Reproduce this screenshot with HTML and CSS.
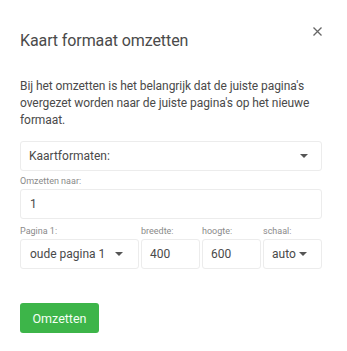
FILE: index.html
```html
<!DOCTYPE html>
<html>
<head>
<meta charset="utf-8">
<link rel="stylesheet" href="styles.css">
</head>
<body>
<div class="dialog">
  <button class="close" aria-label="close">
    <svg width="9" height="9" viewBox="0 0 9 9"><path d="M0.5 0.5 L8.5 8.5 M8.5 0.5 L0.5 8.5" stroke="#666" stroke-width="1.3" fill="none"/></svg>
  </button>
  <h1 class="title">Kaart formaat omzetten</h1>
  <p class="intro">Bij het omzetten is het belangrijk dat de juiste pagina's overgezet worden naar de juiste pagina's op het nieuwe formaat.</p>
  <div class="box select-box main-select">
    <span>Kaartformaten:</span>
    <span class="caret"></span>
  </div>
  <div class="field">
    <div class="label">Omzetten naar:</div>
    <div class="box input-box">1</div>
  </div>
  <div class="row">
    <div class="col col-page">
      <div class="label">Pagina 1:</div>
      <div class="box select-box"><span>oude pagina 1</span><span class="caret"></span></div>
    </div>
    <div class="col col-num">
      <div class="label">breedte:</div>
      <div class="box input-box">400</div>
    </div>
    <div class="col col-num">
      <div class="label">hoogte:</div>
      <div class="box input-box">600</div>
    </div>
    <div class="col col-num">
      <div class="label">schaal:</div>
      <div class="box select-box scale"><span>auto</span><span class="caret"></span></div>
    </div>
  </div>
  <button class="submit">Omzetten</button>
</div>
</body>
</html>
```
FILE: styles.css
```css
html, body {
  margin: 0;
  padding: 0;
  background: #fff;
}
body {
  font-family: Roboto, "Noto Sans", sans-serif;
  color: #444;
}
.dialog {
  position: relative;
  width: 302px;
  padding: 30px 25px 20px 20px;
}
.close {
  position: absolute;
  top: 27px;
  left: 313px;
  border: 0;
  background: none;
  padding: 0;
  width: 9px;
  height: 9px;
  display: block;
}
.close svg { display: block; }
.title {
  margin: 0;
  font-weight: 400;
  font-size: 16px;
  letter-spacing: -0.1px;
  line-height: 22px;
  color: #4a4a4a;
}
.intro {
  margin: 26px 0 0 0;
  font-size: 12px;
  letter-spacing: -0.07px;
  line-height: 17px;
  color: #4a4a4a;
}
.box {
  box-sizing: border-box;
  height: 30px;
  border: 1px solid #ececec;
  border-radius: 3px;
  display: flex;
  align-items: center;
  font-size: 12px;
  color: #4a4a4a;
}
.main-select {
  margin-top: 12px;
  padding: 0 13px 0 8px;
  justify-content: space-between;
}
.select-box {
  justify-content: space-between;
}
.caret {
  width: 0;
  height: 0;
  border-left: 4px solid transparent;
  border-right: 4px solid transparent;
  border-top: 4px solid #555;
}
.field {
  margin-top: 5px;
}
.label {
  font-size: 9px;
  line-height: 11px;
  color: #8a8a8a;
  margin-bottom: 2px;
  white-space: nowrap;
}
.input-box {
  padding: 0 8px;
}
.field .input-box { padding-left: 9px; }
.row {
  display: flex;
  gap: 2px;
  margin-top: 7px;
}
.col-page { width: 119px; }
.col-num { width: 59px; }
.col-page .select-box {
  padding: 0 15px 0 9px;
}
.col-num .input-box { padding-left: 8px; }
.scale { padding: 0 14px 0 8px; }
.submit {
  margin-top: 34px;
  display: block;
  width: 79px;
  height: 30px;
  border: 0;
  border-radius: 3px;
  background: #3db549;
  color: #f4fff4;
  font-family: Roboto, "Noto Sans", sans-serif;
  font-size: 12.5px;
  padding: 0;
}
```
